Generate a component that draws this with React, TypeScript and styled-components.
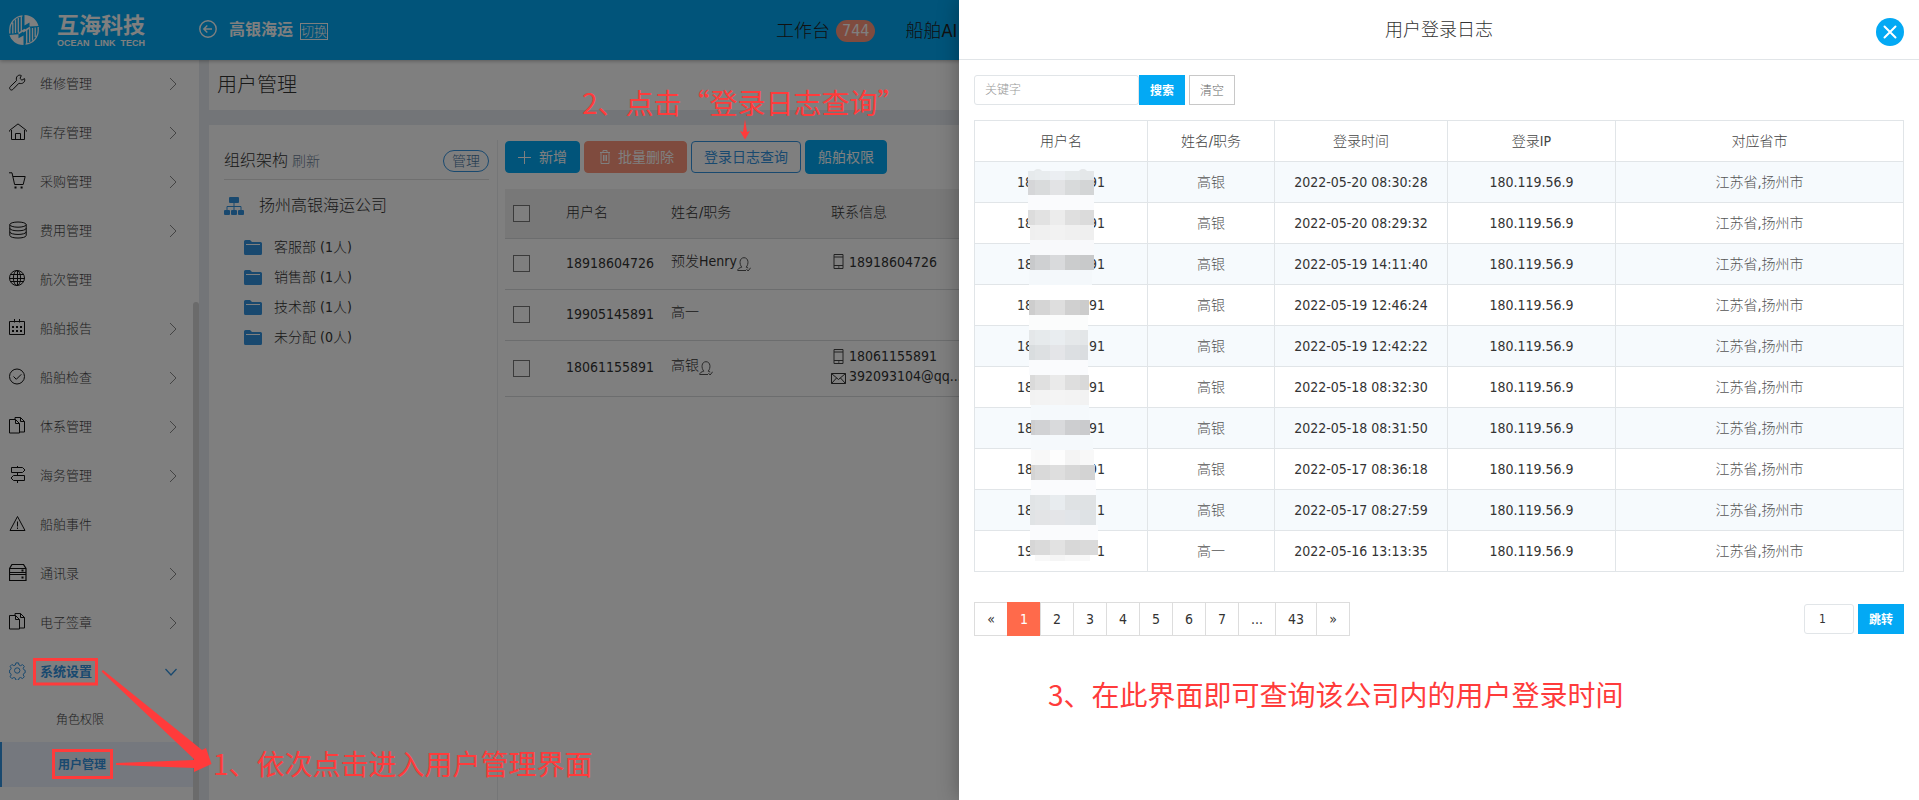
import React from 'react';
import styled, { createGlobalStyle, css } from 'styled-components';

const blue = '#03a9f4';
const link = '#3393df';
const coral = '#ff6a4b';
const softCoral = '#ff967c';
const marker = '#ff3b3b';
const line = '#e1e5e8';

const GlobalStyle = createGlobalStyle`
  *, *::before, *::after { box-sizing: border-box; }
  body {
    margin: 0;
    font-family: 'DejaVu Sans Condensed', 'Noto Sans CJK SC', sans-serif;
    font-size: 14px;
    font-weight: 300;
    line-height: 20px;
    color: #333;
    background: #fff;
  }
  button, input { font: inherit; color: inherit; margin: 0; }
  button { cursor: pointer; }
  a { color: inherit; text-decoration: none; }
  h1, h2, ul, ol, p { margin: 0; padding: 0; font-weight: inherit; list-style: none; }
  svg { display: block; flex: none; }
`;

const Page = styled.div`
  position: relative;
  min-height: 100vh;
  display: flex;
  flex-direction: column;
  overflow: hidden;
`;

/* ---------- top bar ---------- */

const TopBar = styled.header`
  display: flex;
  align-items: center;
  height: 60px;
  padding-left: 9px;
  background: ${blue};
  color: #fff;
  box-shadow: 0 1px 4px rgba(0, 0, 0, 0.3);
  z-index: 1;
`;

const Brand = styled.div`
  display: flex;
  align-items: center;
  gap: 18px;
  width: 190px;
`;

const BrandName = styled.div`
  display: flex;
  flex-direction: column;
  padding-top: 1px;
  font: 700 22px/25px 'Liberation Sans', 'Noto Sans CJK SC', sans-serif;
`;

const BrandLatin = styled.div`
  display: flex;
  justify-content: space-between;
  font: 700 9px/10px 'Liberation Sans', sans-serif;
`;

const Company = styled.div`
  display: flex;
  align-items: center;
  gap: 12px;
  width: 577px;
  font-size: 16px;
  font-weight: 700;
  svg { margin-bottom: 3px; }
`;

const SwitchLink = styled.a`
  margin: 2px 0 0 -5px;
  border: 1px solid #fff;
  font-size: 13px;
  font-weight: 300;
  line-height: 15px;
`;

const TopLinks = styled.nav`
  display: flex;
  align-items: center;
  gap: 30px;
  padding-top: 2px;
  font-size: 18px;
  color: #222;
  white-space: nowrap;
  a { display: flex; align-items: center; gap: 6px; }
`;

const Badge = styled.span`
  padding: 0 6px;
  border-radius: 11px;
  background: ${softCoral};
  color: #fff;
  font-size: 16px;
  line-height: 22px;
`;

/* ---------- side menu ---------- */

const Body = styled.div`
  flex: 1;
  display: flex;
`;

const Sidebar = styled.nav`
  position: relative;
  flex: none;
  width: 199px;
  background: #fff;
`;

const MenuItem = styled.a<{ $active?: boolean }>`
  display: flex;
  align-items: center;
  gap: 13px;
  height: 49px;
  padding: 0 22px 1px 9px;
  font-size: 13px;
  color: ${p => (p.$active ? link : '#444')};
  font-weight: ${p => (p.$active ? 700 : 300)};
  svg { color: ${p => (p.$active ? link : '#111')}; }
  svg:first-child { margin-bottom: 3px; }
  svg:last-child:not(:first-child) { margin-left: auto; color: ${p => (p.$active ? link : '#888')}; }
`;

const SubItem = styled.a<{ $active?: boolean }>`
  display: block;
  height: 45px;
  padding-left: 56px;
  font-size: 12px;
  line-height: 47px;
  color: #444;
  ${p => p.$active && css`
    border-left: 2px solid ${link};
    background: #ebf1fd;
    color: ${link};
    font-weight: 700;
  `}
`;

const ScrollThumb = styled.div`
  position: absolute;
  top: 242px;
  right: 0;
  bottom: 0;
  width: 6px;
  border-radius: 3px 3px 0 0;
  background: #d6d6d6;
`;

/* ---------- main area ---------- */

const Main = styled.main`
  flex: 1;
  min-width: 0;
  display: flex;
  flex-direction: column;
  gap: 15px;
  padding-left: 10px;
  background: #e7ebf0;
`;

const PageTitle = styled.h1`
  padding: 0 8px;
  background: #fff;
  font-size: 20px;
  line-height: 50px;
`;

const Content = styled.section`
  flex: 1;
  display: flex;
  padding: 15px 0 0 15px;
  background: #fff;
`;

const Tree = styled.aside`
  flex: none;
  width: 274px;
  padding-right: 8px;
  border-right: 1px solid #eaecee;
`;

const TreeHead = styled.div`
  display: flex;
  align-items: center;
  gap: 4px;
  height: 40px;
  padding-top: 2px;
  border-bottom: 1px solid #dedede;
  h2 { font-size: 16px; }
  a { color: #6c8096; }
`;

const PillButton = styled.button`
  margin-left: auto;
  height: 22px;
  padding: 0 8px;
  border: 1px solid ${link};
  border-radius: 11px;
  background: none;
  color: #47759f;
  line-height: 20px;
`;

const TreeRoot = styled.div`
  display: flex;
  align-items: center;
  gap: 15px;
  height: 52px;
  font-size: 16px;
  svg { color: ${link}; }
`;

const TreeLeaf = styled.li`
  display: flex;
  align-items: center;
  gap: 12px;
  height: 30px;
  padding-left: 20px;
  svg { color: ${link}; }
`;

const Users = styled.div`
  flex: 1;
  min-width: 0;
  padding-left: 7px;
`;

const Toolbar = styled.div`
  display: flex;
  align-items: center;
  gap: 4px;
  height: 34px;
  margin-bottom: 15px;
`;

const toneColor = (tone?: 'danger' | 'outline') =>
  tone === 'danger' ? softCoral : tone === 'outline' ? link : blue;

const ToolButton = styled.button<{ $tone?: 'danger' | 'outline'; $tall?: boolean }>`
  display: flex;
  align-items: center;
  gap: 8px;
  height: ${p => (p.$tall ? 34 : 32)}px;
  padding: 0 12px 0 ${p => (p.$tone === 'danger' ? 15 : 12)}px;
  border: 1px solid ${p => toneColor(p.$tone)};
  border-radius: 4px;
  background: ${p => (p.$tone === 'outline' ? '#fff' : toneColor(p.$tone))};
  color: ${p => (p.$tone === 'outline' ? link : '#fff')};
  font-weight: 400;
  white-space: nowrap;
`;

const UserTable = styled.table`
  width: 100%;
  table-layout: fixed;
  border-collapse: collapse;
  text-align: left;
  th { height: 49px; background: #f0f0f0; font-weight: 300; }
  th, td { padding: 0 8px; border-bottom: 1px solid #d8dadc; }
  td { height: 51px; }
  th:not(:first-child), td:nth-child(2) { padding-bottom: 2px; }
  tr:last-child td { height: 56px; }
`;

const Tick = styled.input`
  appearance: none;
  display: block;
  width: 17px;
  height: 17px;
  border: 1px solid #777;
  background: #fff;
`;

const NameCell = styled.div`
  display: flex;
  align-items: flex-start;
  min-height: 24px;
  line-height: 18px;
  svg { margin-top: 5px; }
`;

const Contacts = styled.div`
  padding-bottom: 4px;
`;

const Contact = styled.div`
  display: flex;
  align-items: center;
  gap: 3px;
`;

/* ---------- drawer ---------- */

const Backdrop = styled.div`
  position: absolute;
  inset: 0;
  z-index: 2;
  background: rgba(0, 0, 0, 0.5);
`;

const Drawer = styled.section`
  position: absolute;
  top: 0;
  right: 0;
  bottom: 0;
  z-index: 3;
  width: round(up, 50%, 1px);
  background: #fff;
  box-shadow: 0 0 20px rgba(0, 0, 0, 0.3);
`;

const DrawerHead = styled.header`
  position: relative;
  height: 60px;
  border-bottom: 1px solid ${line};
  text-align: center;
  h2 { font-size: 18px; line-height: 60px; height: 59px; }
`;

const CloseButton = styled.button`
  position: absolute;
  top: 18px;
  right: 15px;
  width: 28px;
  height: 28px;
  padding: 0;
  border: 0;
  border-radius: 50%;
  background: ${blue};
  color: #fff;
`;

const DrawerBody = styled.div`
  padding: 15px;
`;

const SearchForm = styled.form`
  display: flex;
  margin-bottom: 15px;
`;

const TextBox = styled.input<{ $width: number }>`
  width: ${p => p.$width}px;
  height: 30px;
  padding: 0 ${p => (p.$width > 100 ? 10 : 14)}px;
  border: 1px solid ${line};
  border-radius: 3px;
  background: #fff;
  font-size: 12px;
  outline: 0;
  &::placeholder { color: #999; opacity: 1; }
`;

const SmallButton = styled.button<{ $plain?: boolean }>`
  width: 46px;
  height: 30px;
  padding: 1px 0 0;
  border: 1px solid ${p => (p.$plain ? '#c8c8c8' : blue)};
  background: ${p => (p.$plain ? '#fff' : blue)};
  color: ${p => (p.$plain ? '#666' : '#fff')};
  font-size: 12px;
  font-weight: ${p => (p.$plain ? 300 : 700)};
  & + & { margin-left: 4px; }
`;

const LogWrap = styled.div`
  position: relative;
`;

const LogTable = styled.table`
  width: 100%;
  table-layout: fixed;
  border-collapse: collapse;
  text-align: center;
  th, td { height: 41px; padding: 0; border: 1px solid ${line}; }
  th { font-weight: 300; color: #444; }
  tbody tr:nth-child(odd) { background: #f6fafd; }
  td:nth-child(2), td:nth-child(5) { color: #555; }
`;

const Account = styled.span`
  display: flex;
  justify-content: space-between;
  width: 88px;
  margin: 0 auto;
`;

const Mask = styled.svg`
  position: absolute;
  top: 45px;
  left: 50px;
`;

const PagerRow = styled.div`
  display: flex;
  align-items: center;
  justify-content: space-between;
  margin-top: 30px;
`;

const Pager = styled.ul`
  display: flex;
  padding-left: 1px;
`;

const PageLink = styled.a<{ $current?: boolean }>`
  display: block;
  min-width: 34px;
  margin-left: -1px;
  padding: 0 12px;
  border: 1px solid ${p => (p.$current ? coral : '#ddd')};
  background: ${p => (p.$current ? coral : '#fff')};
  color: ${p => (p.$current ? '#fff' : 'inherit')};
  line-height: 32px;
  text-align: center;
`;

const JumpForm = styled.form`
  display: flex;
  gap: 4px;
`;

/* ---------- guide marks ---------- */

const noteText = css`
  font: 400 28px/40px 'Noto Sans CJK SC', sans-serif;
  color: ${marker};
  white-space: nowrap;
`;

const DrawerNote = styled.p`
  ${noteText}
  margin: 38px 0 0 74px;
`;

const FloatingNote = styled.p<{ $x: number; $y: number }>`
  ${noteText}
  position: absolute;
  z-index: 4;
  left: ${p => p.$x}px;
  top: ${p => p.$y}px;
`;

const Marks = styled.svg`
  position: absolute;
  z-index: 4;
  left: 0;
  top: 0;
  pointer-events: none;
`;

/* ---------- icons ---------- */

const Icon = ({ children }: { children: React.ReactNode }) => (
  <svg width="18" height="18" viewBox="0 0 18 18" fill="none" stroke="currentColor" aria-hidden="true">
    {children}
  </svg>
);

const icons: Record<string, React.ReactNode> = {
  wrench: (
    <Icon>
      <path d="M15.500 4.600l-2.600 1.600-1.900-1.800 1.300-2.800C9.500 0 6.300 2.800 7.600 6.500L1.200 12.700c-1.700 1.900.7 4.500 2.600 2.800L10 9.200c3.400 1.400 6.700-1.300 5.500-4.600z" />
    </Icon>
  ),
  home: (
    <Icon>
      <path d="M.6 8.600v-1.200L9 .9l8.400 6.500v1.200M2.500 7v9.500h13V7M6.500 16.500v-6h5v6" />
    </Icon>
  ),
  cart: (
    <Icon>
      <path d="M0 .8h3l2.600 11.700h8.600l2-8H4" />
      <path d="M5.500 15.500h2M11.600 15.500h2" strokeWidth="2" />
    </Icon>
  ),
  coins: (
    <Icon>
      <ellipse cx="9" cy="3.600" rx="8.200" ry="2.600" />
      <path d="M.8 3.600v10.800c0 3.500 16.400 3.500 16.400 0V3.600M.8 7.200c0 3.500 16.400 3.500 16.400 0M.8 10.800c0 3.500 16.400 3.500 16.400 0" />
    </Icon>
  ),
  globe: (
    <Icon>
      <circle cx="8" cy="8" r="7.500" />
      <ellipse cx="8" cy="8" rx="3.600" ry="7.500" />
      <path d="M8.500.5v15M.7 8.500h15M2 4.500h12.500M2 11.500h12.500" />
    </Icon>
  ),
  calendar: (
    <Icon>
      <path d="M.5 2.500h15v13H.5zM5.500 0v3.500M10.500 0v3.500" />
      <path d="M3 8h2M7 8h2M11 8h2M3 12h2M7 12h2M11 12h2" strokeWidth="2" />
    </Icon>
  ),
  check: (
    <Icon>
      <circle cx="8" cy="8.500" r="7.500" />
      <path d="M4.500 8.500l2.800 2.800 5-5" />
    </Icon>
  ),
  files: (
    <Icon>
      <path d="M.5 2.500h6l4 4v9.500H.5zM6.500 2.500v4h4M6 2.500v-2h5.500l4 4v10.500h-5M11.500.5v4h4" />
    </Icon>
  ),
  signpost: (
    <Icon>
      <path d="M8.500 0v1.500M8.500 6.500v3M8.500 14.500V17M2.500 1.500h11l2.500 2.500-2.500 2.500h-11zM15.500 9.500h-11L2 12l2.500 2.500h11z" />
    </Icon>
  ),
  alert: (
    <Icon>
      <path d="M8.500 1.500L16 15.500H1zM8.500 6.500v5M8.500 12.500v1.500" />
    </Icon>
  ),
  server: (
    <Icon>
      <path d="M.5 4.500l2.500-4h11.500l2.500 4v12H.5zM.5 4.500h16.500M.5 8.500h16.500M.5 10.500h16.500" strokeWidth="1.200" />
      <path d="M12.500 6.500h2M12.500 13.500h2" strokeWidth="2" />
    </Icon>
  ),
  gear: (
    <Icon>
      <circle cx="8.200" cy="8.500" r="2.700" />
      <path d="M6.900.9h2.600l.5 2.100 1.600.7 1.900-1.100 1.800 1.800-1.100 1.900.7 1.500 1.300.6v2.300l-1.300.6-.7 1.600 1.100 1.900-1.800 1.800-1.900-1.100-1.600.7-.5 2H6.900l-.5-2-1.600-.7-1.900 1.100-1.800-1.800 1.100-1.900-.7-1.600-.9-.3V8.100l.9-.4.700-1.500-1.100-1.900 1.800-1.800 1.900 1.100L6.400 3z" />
    </Icon>
  ),
};

const ChevronRight = () => (
  <svg width="8" height="14" viewBox="0 0 8 14" fill="none" stroke="currentColor" aria-hidden="true">
    <path d="M1 1l6 6-6 6" />
  </svg>
);

const ChevronDown = () => (
  <svg width="12" height="8" viewBox="0 0 12 8" fill="none" stroke="currentColor" strokeWidth="1.300" aria-hidden="true">
    <path d="M.5 1L6 7l5.500-6" />
  </svg>
);

const Logo = () => (
  <svg width="30" height="30" viewBox="0 0 30 30" aria-hidden="true">
    <path fill="#fff" d="M15.500 0C23 0 28 5 29.500 11L20.500 11.500V7.500l-5 3z" />
    <path fill="#fff" d="M14.500 30C7 30 2 25 .5 20l9-.8v4l5-2.700z" />
    <path
      d="M13.500.8C6 1.500.8 7.500.8 15v3.500M3.800 18.500V7.500M6.500 18V4.500M9.300 17.500V3M12.300 16V1.500M16.500 29.200c7.500-.7 12.700-6.700 12.700-14.200v-3M26.200 12.500v9.500M23.500 13v12.500M20.700 13.500V27M17.700 15v13.500"
      fill="none" stroke="#fff" strokeWidth="1.300"
    />
    <path d="M9.500 18.500L16 14.300M14 16.800l7-4.300" stroke="#fff" strokeWidth="1.600" />
  </svg>
);

const BackIcon = () => (
  <svg width="18" height="18" viewBox="0 0 18 18" fill="none" stroke="#fff" strokeWidth="1.400" aria-hidden="true">
    <circle cx="9" cy="9" r="8.200" />
    <path d="M13 9H5M8.300 5.500L4.800 9l3.500 3.500" />
  </svg>
);

const OrgIcon = () => (
  <svg width="20" height="18" viewBox="0 0 20 18" fill="currentColor" aria-hidden="true">
    <rect x="5" width="10" height="6" rx="1" />
    <rect y="13" width="6" height="5" rx="1" />
    <rect x="7" y="13" width="6" height="5" rx="1" />
    <rect x="14" y="13" width="6" height="5" rx="1" />
    <path d="M10 6v7M3 13V9.500h14V13" fill="none" stroke="currentColor" />
  </svg>
);

const FolderIcon = () => (
  <svg width="18" height="15" viewBox="0 0 18 15" aria-hidden="true">
    <path d="M0 1.500Q0 0 1.500 0H6l2 2h8.500Q18 2 18 3.500v10q0 1.500-1.500 1.500h-15Q0 15 0 13.500z" fill="currentColor" />
    <path d="M2 4.500h14" stroke="#fff" />
  </svg>
);

const PersonIcon = () => (
  <svg width="14" height="15" viewBox="0 0 14 15" fill="none" stroke="#555" aria-hidden="true">
    <path d="M9 13.500H.7c0-2 1.800-2.600 4.100-3.300C2 7 2.400.7 7 .7s5 6.300 2.200 9.500l2 .8M9.500 12.200l1.600 1.800 2.600-3.300" />
  </svg>
);

const PhoneIcon = () => (
  <svg width="15" height="15" viewBox="0 0 15 15" fill="none" stroke="#444" aria-hidden="true">
    <path d="M3 .5h9v14H3zM3 3h9M3 11.500h9M7 13h1.500" />
  </svg>
);

const MailIcon = () => (
  <svg width="15" height="15" viewBox="0 0 15 15" fill="none" stroke="#333" aria-hidden="true">
    <path d="M.5 4.500h14v10H.5zM.5 4.500l7 6 7-6M.5 14.500l5-5.500M14.500 14.500l-5-5.500" />
  </svg>
);

const PlusIcon = () => (
  <svg width="13" height="13" viewBox="0 0 13 13" stroke="currentColor" aria-hidden="true">
    <path d="M6.500 0v13M0 6.500h13" />
  </svg>
);

const TrashIcon = () => (
  <svg width="10" height="14" viewBox="0 0 10 14" fill="none" stroke="currentColor" aria-hidden="true">
    <path d="M0 2.500h10M3 2.500v-2h4v2M1 2.500v11h8v-11M3.500 5v6M5 5v6M6.500 5v6" />
  </svg>
);

/* ---------- data ---------- */

const menu: { label: string; icon: string; leaf?: boolean }[] = [
  { label: '维修管理', icon: 'wrench' },
  { label: '库存管理', icon: 'home' },
  { label: '采购管理', icon: 'cart' },
  { label: '费用管理', icon: 'coins' },
  { label: '航次管理', icon: 'globe', leaf: true },
  { label: '船舶报告', icon: 'calendar' },
  { label: '船舶检查', icon: 'check' },
  { label: '体系管理', icon: 'files' },
  { label: '海务管理', icon: 'signpost' },
  { label: '船舶事件', icon: 'alert', leaf: true },
  { label: '通讯录', icon: 'server' },
  { label: '电子签章', icon: 'files' },
];

const departments: [string, number][] = [['客服部', 1], ['销售部', 1], ['技术部', 1], ['未分配', 0]];

const users = [
  { account: '18918604726', name: '预发Henry', bound: true, phone: '18918604726' },
  { account: '19905145891', name: '高一', bound: false },
  { account: '18061155891', name: '高银', bound: true, phone: '18061155891', mail: '392093104@qq...' },
];

const logs = [
  ['18', '91', '高银', '2022-05-20 08:30:28'],
  ['18', '91', '高银', '2022-05-20 08:29:32'],
  ['18', '91', '高银', '2022-05-19 14:11:40'],
  ['18', '91', '高银', '2022-05-19 12:46:24'],
  ['18', '91', '高银', '2022-05-19 12:42:22'],
  ['18', '91', '高银', '2022-05-18 08:32:30'],
  ['18', '91', '高银', '2022-05-18 08:31:50'],
  ['18', '91', '高银', '2022-05-17 08:36:18'],
  ['18', '1', '高银', '2022-05-17 08:27:59'],
  ['19', '1', '高一', '2022-05-16 13:13:35'],
];

/* Mosaic bands over the account numbers: top, height, left, right, then five tile colours. */
const tileEdges = [11, 26, 41, 56];
const bands: [number, number, number, number, string][] = [
  [6, 9, 4, 70, 'e6eaec e8ecee ebeef2 e6eaec e4e7e9'],
  [15, 15, 4, 70, 'd5d6d8 d9dbdc e2e3e5 d8dadb d3d5d6'],
  [30, 15, 4, 70, 'fafbfd fafbfd fafbfd fafbfd fafbfd'],
  [45, 15, 4, 70, 'dcdcdc e2e2e2 ececec dfdfdf dbdbdb'],
  [60, 15, 6, 70, 'efefef f0f0f0 f2f2f2 f0f0f0 efefef'],
  [75, 15, 6, 70, 'f8f9fb f8f9fb f8f9fb f8f9fb f8f9fb'],
  [90, 15, 6, 70, 'c8c9cb cfd0d2 d9dadc cbcccd c8c9ca'],
  [105, 15, 5, 68, 'f4f8fb f4f8fb f4f8fb f4f8fb f4f8fb'],
  [135, 15, 5, 65, 'cdcdcd d5d5d5 dedede d0d0d0 cccccc'],
  [150, 15, 5, 64, 'fbfcfc fbfcfc fbfcfc fbfcfc fbfcfc'],
  [165, 15, 5, 64, 'e4e7e9 e6eaec e9edf0 e5e8ea e3e6e8'],
  [180, 15, 5, 64, 'd9dddf dde0e2 e4e5e8 dcdfe2 dadde0'],
  [195, 15, 5, 64, 'fafbfd fafbfd fafbfd fafbfd fafbfd'],
  [210, 15, 6, 65, 'dadada e0e0e0 eaeaea dedede d9d9d9'],
  [225, 15, 6, 65, 'f2f2f2 f3f3f3 f4f4f4 f3f3f3 f2f2f2'],
  [240, 15, 7, 65, 'f5f9fc f5f9fc f5f9fc f5f9fc f5f9fc'],
  [255, 15, 7, 66, 'cdced0 d1d2d4 d9dadc cdced0 cacbcd'],
  [270, 15, 7, 69, 'f5f9fc f5f9fc f5f9fc f5f9fc f5f9fc'],
  [285, 15, 7, 70, 'f9f9f9 f8f8f8 fdfdfd f4f4f4 f8f8f8'],
  [300, 15, 7, 71, 'd4d4d4 d9d9d9 dedede d7d7d7 d3d3d3'],
  [315, 15, 7, 72, 'fafbfd fafbfd fafbfd fafbfd fafbfd'],
  [330, 15, 6, 72, 'e1e4e6 e3e6e8 e8ecef dfe2e4 dfe2e4'],
  [345, 15, 6, 72, 'e0e3e5 e3e4e6 e4e5e8 e2e5e9 dee2e5'],
  [360, 15, 6, 74, 'fafbfd fafbfd fafbfd fafbfd fafbfd'],
  [375, 15, 6, 74, 'd6d6d6 dadada e2e2e2 d8d8d8 dadada'],
  [390, 6, 11, 66, 'f8f8f8 f8f8f8 f5f5f5 f8f8f8 f8f8f8'],
];

const Mosaic = () => (
  <Mask width="76" height="398" aria-hidden="true">
    <circle cx="14" cy="9" r="5" fill="#e6eaec" />
    <circle cx="59" cy="9" r="5" fill="#e4e7e9" />
    {bands.map(([y, h, x0, x1, colors]) => {
      const edges = [x0, ...tileEdges, x1];
      return colors.split(' ').map((c, i) =>
        edges[i + 1] > edges[i] ? (
          <rect key={`${y}-${i}`} x={edges[i]} y={y} width={edges[i + 1] - edges[i]} height={h} fill={`#${c}`} />
        ) : null,
      );
    })}
  </Mask>
);

const pages = ['«', '1', '2', '3', '4', '5', '6', '7', '...', '43', '»'];

export default function App() {
  return (
    <Page>
      <GlobalStyle />
      <TopBar>
        <Brand>
          <Logo />
          <BrandName>
            互海科技
            <BrandLatin><span>OCEAN</span> <span>LINK</span> <span>TECH</span></BrandLatin>
          </BrandName>
        </Brand>
        <Company>
          <BackIcon />
          高银海运
          <SwitchLink href="#switch">切换</SwitchLink>
        </Company>
        <TopLinks>
          <a href="#desk">工作台<Badge>744</Badge></a>
          <a href="#ai">船舶AI</a>
        </TopLinks>
      </TopBar>

      <Body>
        <Sidebar>
          {menu.map(m => (
            <MenuItem key={m.label} href="#menu">
              {icons[m.icon]}
              {m.label}
              {!m.leaf && <ChevronRight />}
            </MenuItem>
          ))}
          <MenuItem href="#settings" $active>
            {icons.gear}
            系统设置
            <ChevronDown />
          </MenuItem>
          <SubItem href="#roles">角色权限</SubItem>
          <SubItem href="#users" $active>用户管理</SubItem>
          <ScrollThumb />
        </Sidebar>

        <Main>
          <PageTitle>用户管理</PageTitle>
          <Content>
            <Tree>
              <TreeHead>
                <h2>组织架构</h2>
                <a href="#refresh">刷新</a>
                <PillButton type="button">管理</PillButton>
              </TreeHead>
              <TreeRoot><OrgIcon />扬州高银海运公司</TreeRoot>
              <ul>
                {departments.map(([name, count]) => (
                  <TreeLeaf key={name}><FolderIcon />{`${name} (${count}人)`}</TreeLeaf>
                ))}
              </ul>
            </Tree>
            <Users>
              <Toolbar>
                <ToolButton type="button"><PlusIcon />新增</ToolButton>
                <ToolButton type="button" $tone="danger"><TrashIcon />批量删除</ToolButton>
                <ToolButton type="button" $tone="outline">登录日志查询</ToolButton>
                <ToolButton type="button" $tall>船舶权限</ToolButton>
              </Toolbar>
              <UserTable>
                <colgroup>
                  <col width="53" /><col width="105" /><col width="160" /><col />
                </colgroup>
                <thead>
                  <tr>
                    <th><Tick type="checkbox" aria-label="全选" /></th>
                    <th>用户名</th>
                    <th>姓名/职务</th>
                    <th>联系信息</th>
                  </tr>
                </thead>
                <tbody>
                  {users.map(u => (
                    <tr key={u.account}>
                      <td><Tick type="checkbox" aria-label={u.account} /></td>
                      <td>{u.account}</td>
                      <td><NameCell>{u.name}{u.bound && <PersonIcon />}</NameCell></td>
                      <td>
                        <Contacts>
                          {u.phone && <Contact><PhoneIcon />{u.phone}</Contact>}
                          {u.mail && <Contact><MailIcon />{u.mail}</Contact>}
                        </Contacts>
                      </td>
                    </tr>
                  ))}
                </tbody>
              </UserTable>
            </Users>
          </Content>
        </Main>
      </Body>

      <Backdrop />

      <Drawer role="dialog" aria-label="用户登录日志">
        <DrawerHead>
          <h2>用户登录日志</h2>
          <CloseButton type="button" aria-label="关闭">
            <svg width="28" height="28" viewBox="0 0 28 28" stroke="currentColor" strokeWidth="2" strokeLinecap="round">
              <path d="M8.500 8.500l11 11M19.500 8.500l-11 11" />
            </svg>
          </CloseButton>
        </DrawerHead>
        <DrawerBody>
          <SearchForm>
            <TextBox $width={165} placeholder="关键字" aria-label="关键字" />
            <SmallButton type="button">搜索</SmallButton>
            <SmallButton type="button" $plain>清空</SmallButton>
          </SearchForm>
          <LogWrap>
            <LogTable>
              <colgroup>
                <col width="173" /><col width="127" /><col width="173" /><col width="168" /><col />
              </colgroup>
              <thead>
                <tr><th>用户名</th><th>姓名/职务</th><th>登录时间</th><th>登录IP</th><th>对应省市</th></tr>
              </thead>
              <tbody>
                {logs.map(([head, tail, name, time]) => (
                  <tr key={time}>
                    <td><Account><span>{head}</span><span>{tail}</span></Account></td>
                    <td>{name}</td>
                    <td>{time}</td>
                    <td>180.119.56.9</td>
                    <td>江苏省,扬州市</td>
                  </tr>
                ))}
              </tbody>
            </LogTable>
            <Mosaic />
          </LogWrap>
          <PagerRow>
            <Pager>
              {pages.map(p => (
                <li key={p}><PageLink href="#page" $current={p === '1'}>{p}</PageLink></li>
              ))}
            </Pager>
            <JumpForm>
              <TextBox $width={50} defaultValue="1" aria-label="页码" />
              <SmallButton type="button">跳转</SmallButton>
            </JumpForm>
          </PagerRow>
          <DrawerNote>3、在此界面即可查询该公司内的用户登录时间</DrawerNote>
        </DrawerBody>
      </Drawer>

      <FloatingNote $x={213} $y={743}>1、依次点击进入用户管理界面</FloatingNote>
      <FloatingNote $x={582} $y={82}>2、点击“登录日志查询”</FloatingNote>
      <Marks width="960" height="800" fill={marker} aria-hidden="true">
        <path d="M34.500 659.500h62v24.500h-62zM53.500 750.500h58v27h-58z" fill="none" stroke={marker} strokeWidth="3" />
        <path d="M101.500 671.500l1.500-1.500 99 80 4-2 5.500 16L194 772v-4l-78-3v-2l78-3v-1z" />
        <path d="M745 119l2 13 3-1-5 8.500-5-8.500 3 1z" />
      </Marks>
    </Page>
  );
}
